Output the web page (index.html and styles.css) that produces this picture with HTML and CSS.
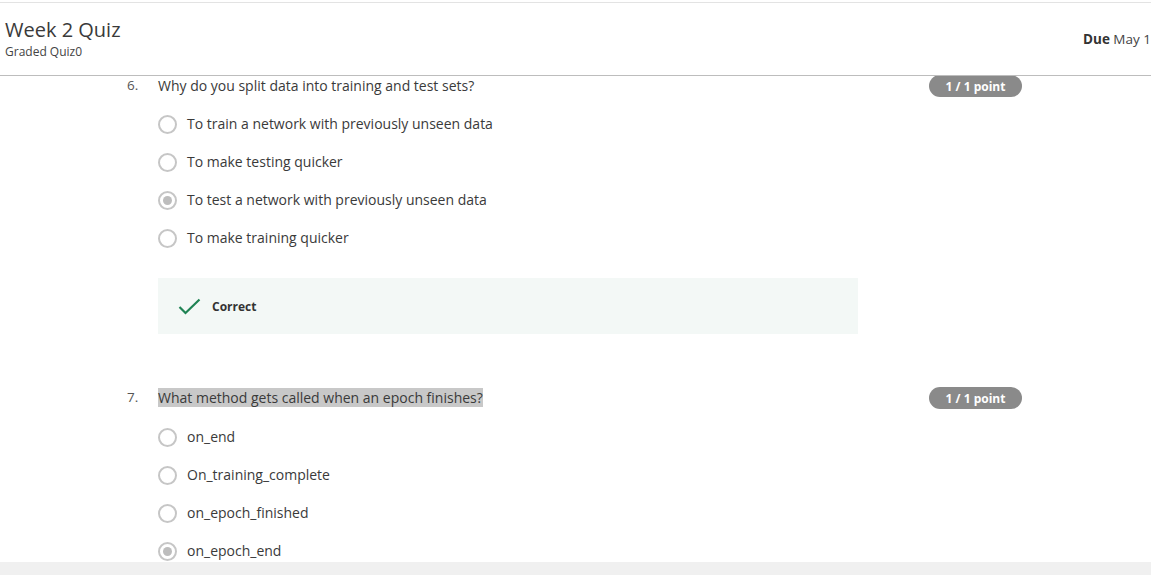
FILE: index.html
```html
<!DOCTYPE html>
<html>
<head>
<meta charset="utf-8">
<link rel="stylesheet" href="styles.css">
</head>
<body>
<div class="page">
  <header class="header">
    <div class="title-block">
      <div class="title">Week 2 Quiz</div>
      <div class="subtitle">Graded Quiz0</div>
    </div>
    <div class="due"><b>Due</b> May 1</div>
  </header>
  <main class="main">
    <section class="question q6">
      <div class="qnum">6.</div>
      <div class="qtext">Why do you split data into training and test sets?</div>
      <div class="badge">1 / 1 point</div>
      <div class="qbody">
        <div class="options">
          <div class="option"><span class="radio"></span><span class="label">To train a network with previously unseen data</span></div>
          <div class="option"><span class="radio"></span><span class="label">To make testing quicker</span></div>
          <div class="option"><span class="radio checked"></span><span class="label">To test a network with previously unseen data</span></div>
          <div class="option"><span class="radio"></span><span class="label">To make training quicker</span></div>
        </div>
        <div class="feedback">
          <svg class="check" width="23" height="17" viewBox="0 0 23 17"><path d="M1.5 9 L7.5 15 L21.5 1.5" fill="none" stroke="#1f8354" stroke-width="2.2"/></svg>
          <span class="correct">Correct</span>
        </div>
      </div>
    </section>
    <section class="question q7">
      <div class="qnum">7.</div>
      <div class="qtext"><span class="selected">What method gets called when an epoch finishes?</span></div>
      <div class="badge">1 / 1 point</div>
      <div class="qbody">
        <div class="options">
          <div class="option"><span class="radio"></span><span class="label">on_end</span></div>
          <div class="option"><span class="radio"></span><span class="label">On_training_complete</span></div>
          <div class="option"><span class="radio"></span><span class="label">on_epoch_finished</span></div>
          <div class="option"><span class="radio checked"></span><span class="label">on_epoch_end</span></div>
        </div>
      </div>
    </section>
  </main>
  <footer class="footer"></footer>
</div>
</body>
</html>
```

FILE: styles.css
```css
html, body {
  margin: 0;
  padding: 0;
  overflow: hidden;
  background: #fff;
}
body {
  font-family: "Open Sans", "Liberation Sans", sans-serif;
  color: #333;
}
.page {
  height: 575px;
  display: flex;
  flex-direction: column;
  padding-top: 2px;
  box-sizing: border-box;
}
.header {
  flex-shrink: 0;
  height: 72px;
  border-top: 1px solid #e3e3e3;
  border-bottom: 1px solid #bdbdbd;
  display: flex;
  align-items: center;
  justify-content: space-between;
  padding-left: 5px;
  position: relative;
  z-index: 1;
}
.title {
  font-size: 20px;
  line-height: 24px;
  color: #3a3a3a;
}
.subtitle {
  font-size: 12px;
  line-height: 16px;
  margin-top: 2px;
  color: #444;
}
.due {
  font-size: 13.5px;
  color: #444;
  white-space: nowrap;
}
.due b {
  color: #333;
}
.main {
  flex: 1;
  overflow: hidden;
  margin-top: -1px;
  padding: 0 129px 0 127px;
}
.question {
  display: grid;
  grid-template-columns: 31px 1fr auto;
  grid-template-rows: 22px auto;
  align-items: center;
}
.q7 {
  margin-top: 53px;
}
.qnum {
  font-size: 13.5px;
  color: #555;
  padding-bottom: 2px;
}
.qtext {
  font-size: 14px;
  color: #3a3a3a;
  padding-bottom: 2px;
}
.selected {
  background: #c8c8c8;
}
.badge {
  height: 22px;
  width: 93px;
  border-radius: 11px;
  background: #8a8a8a;
  color: #fff;
  font-size: 12px;
  font-weight: 700;
  display: flex;
  align-items: center;
  justify-content: center;
}
.qbody {
  grid-column: 2 / 4;
}
.options {
  margin-top: 8px;
}
.q7 .options {
  margin-top: 9px;
}
.option {
  height: 38px;
  display: flex;
  align-items: center;
  font-size: 14px;
  color: #3a3a3a;
}
.label {
  padding-bottom: 2px;
}
.radio {
  width: 19px;
  height: 19px;
  box-sizing: border-box;
  border: 2px solid #c6c6c6;
  border-radius: 50%;
  margin-right: 10px;
  display: flex;
  align-items: center;
  justify-content: center;
  flex-shrink: 0;
}
.radio.checked::after {
  content: "";
  width: 9px;
  height: 9px;
  border-radius: 50%;
  background: #bdbdbd;
}
.feedback {
  margin-top: 21px;
  width: 700px;
  height: 56px;
  background: #f3f8f6;
  display: flex;
  align-items: center;
  padding-left: 20px;
  box-sizing: border-box;
}
.check {
  margin-right: 11px;
}
.correct {
  font-size: 12px;
  font-weight: 700;
  color: #333;
}
.footer {
  flex-shrink: 0;
  height: 13px;
  background: #f0f0f0;
}
```
